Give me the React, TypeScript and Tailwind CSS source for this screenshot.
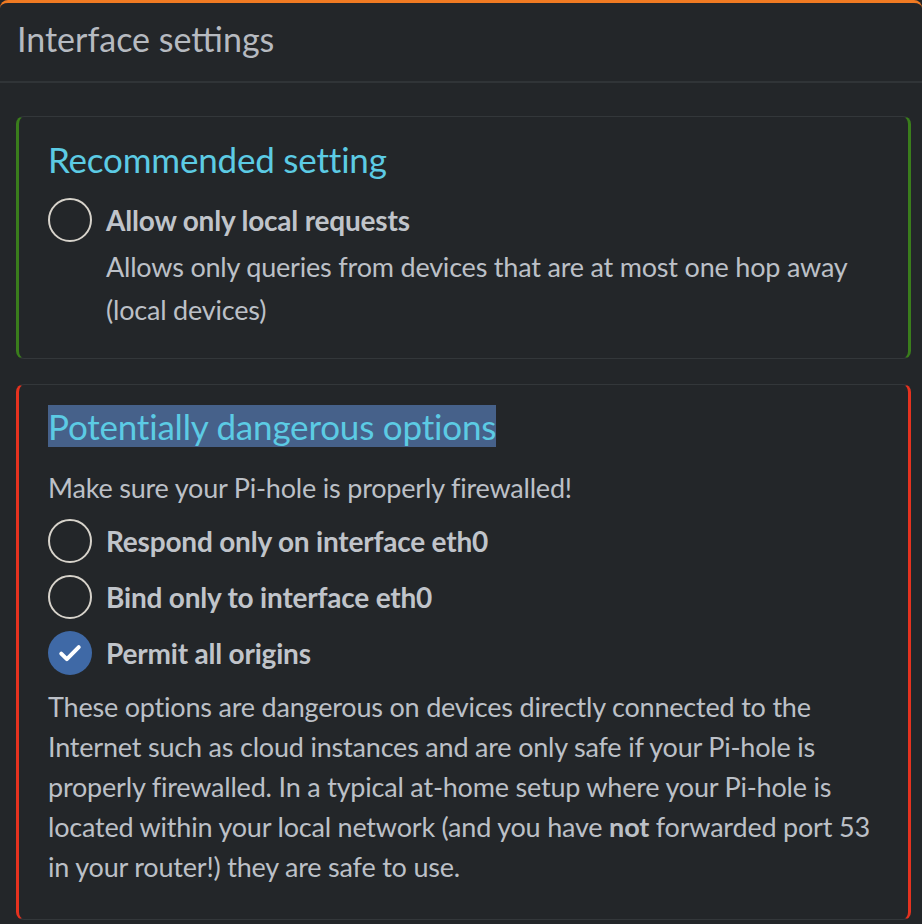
import React from "react";

const font = { fontFamily: '"Lato", "Noto Sans", sans-serif' };

const Radio = ({ checked }: { checked?: boolean }) =>
  checked ? (
    <span className="flex h-[44px] w-[44px] shrink-0 items-center justify-center rounded-full bg-[#3f69a6]">
      <svg width="28" height="28" viewBox="0 0 24 24" fill="none">
        <path
          d="M4.5 12.5l4.8 4.8L19.5 7"
          stroke="white"
          strokeWidth="3.4"
          strokeLinecap="round"
          strokeLinejoin="round"
        />
      </svg>
    </span>
  ) : (
    <span className="h-[44px] w-[44px] shrink-0 rounded-full border-2 border-[#d7d3cb]" />
  );

const Option = ({
  label,
  checked,
  children,
}: {
  label: string;
  checked?: boolean;
  children?: React.ReactNode;
}) => (
  <div className="flex items-start gap-[14px]">
    <Radio checked={checked} />
    <div className="flex-1">
      <div className="text-[28px] font-bold leading-[44px] tracking-[-0.2px] text-[#c0c4ca]">
        {label}
      </div>
      {children}
    </div>
  </div>
);

export default function App() {
  return (
    <div className="min-h-screen bg-[#232629]" style={font}>
      <div className="rounded-t-lg border-t-[3px] border-[#f07a22] bg-[#232629]">
        <div className="flex h-[80px] items-center border-b-2 border-[#303437] px-[17px] pb-[8px]">
          <h3 className="text-[34px] font-normal text-[#b6bac0]">
            Interface settings
          </h3>
        </div>

        <div className="flex flex-col gap-[25px] pl-4 pr-[11px] pt-[33px]">
          <div className="rounded-lg border border-x-[3px] border-[#33373a] border-x-[#3a7d1c] px-[29px] pb-[27px] pt-[19px]">
            <h4 className="text-[35px] leading-[46px] tracking-[-0.2px] text-[#5ccbe4]">
              Recommended setting
            </h4>
            <div className="mt-[16px]">
              <Option label="Allow only local requests">
                <p className="mt-[3px] text-[27px] leading-[43px] tracking-[-0.2px] text-[#bcc0c7]">
                  Allows only queries from devices that are at most one hop away
                  (local devices)
                </p>
              </Option>
            </div>
          </div>

          <div className="rounded-lg border border-x-[3px] border-[#33373a] border-x-[#e5321f] px-[29px] pb-[32px] pt-[18px]">
            <h4 className="text-[35px] leading-[46px] tracking-[-0.2px] text-[#5ccbe4]">
              <span className="bg-[#46618a]">Potentially dangerous options</span>
            </h4>
            <p className="mt-[19px] text-[27px] leading-[40px] tracking-[-0.2px] text-[#bcc0c7]">
              Make sure your Pi-hole is properly firewalled!
            </p>
            <div className="mt-[11px] flex flex-col gap-[12px]">
              <Option label="Respond only on interface eth0" />
              <Option label="Bind only to interface eth0" />
              <Option label="Permit all origins" checked />
            </div>
            <p className="mt-[12px] text-[27px] leading-[40px] tracking-[-0.2px] text-[#bcc0c7]">
              These options are dangerous on devices directly connected to the
              Internet such as cloud instances and are only safe if your Pi-hole
              is properly firewalled. In a typical at-home setup where your
              Pi-hole is located within your local network (and you have{" "}
              <strong className="font-bold">not</strong> forwarded port 53 in
              your router!) they are safe to use.
            </p>
          </div>
        </div>
      </div>
    </div>
  );
}
